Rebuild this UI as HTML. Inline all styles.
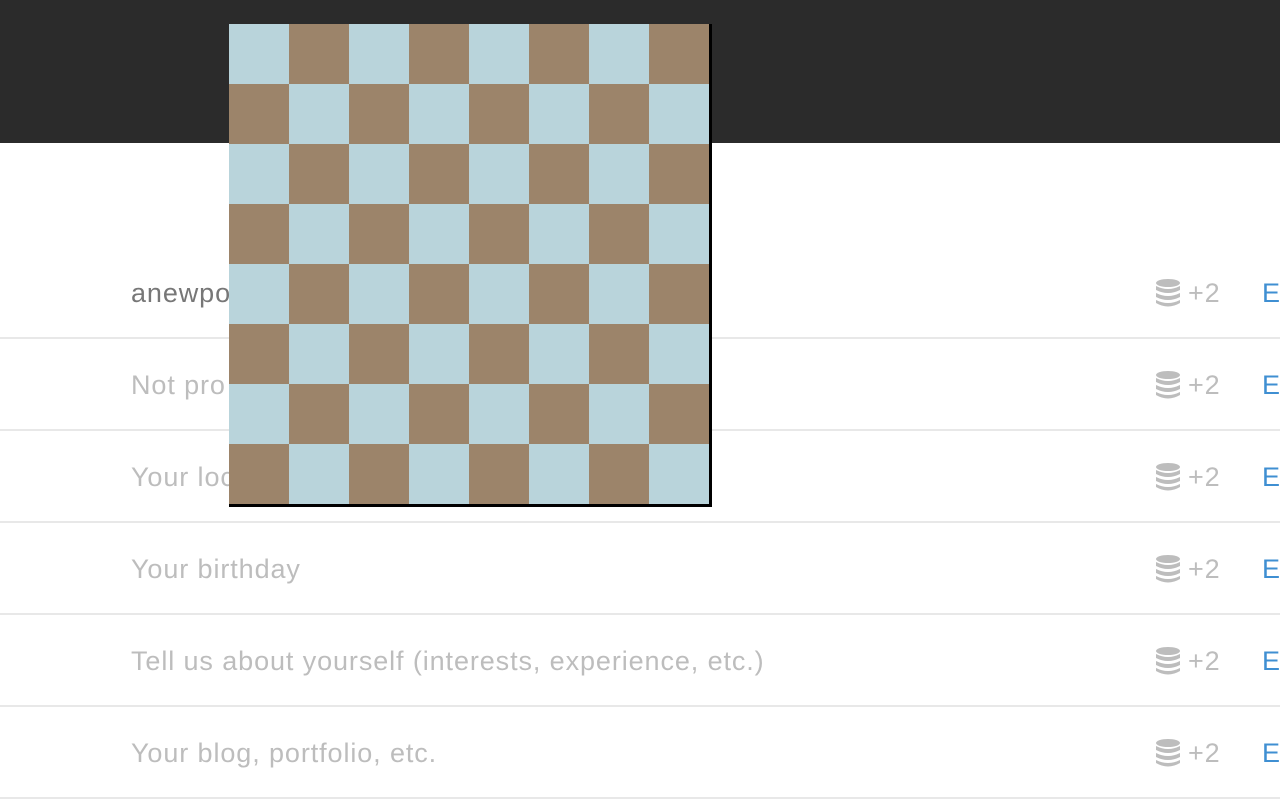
<!DOCTYPE html>
<html><head><style>
body{margin:0;width:1280px;height:800px;overflow:hidden;background:#fff;font-family:"Liberation Sans",sans-serif;position:relative}
.hdr{position:absolute;left:0;top:0;width:1280px;height:143px;background:#2b2b2b}
.row{position:absolute;left:0;width:1280px;height:92px;border-bottom:2px solid #e8e8e8;box-sizing:border-box}
.t{position:absolute;left:131px;top:31px;font-size:27px;letter-spacing:0.9px;color:#bdbdbd}
.ic{position:absolute;left:1155px;top:32px}
.p{position:absolute;left:1188px;top:31px;font-size:27px;letter-spacing:0.9px;color:#bdbdbd}
.e{position:absolute;left:1262px;top:31px;font-size:27px;color:#3f8fd2}
.board{position:absolute;left:229px;top:24px;width:480px;height:480px;border-right:3px solid #000;border-bottom:3px solid #000;display:grid;grid-template-columns:repeat(8,60px);grid-template-rows:repeat(8,60px)}
.l{background:#b9d4db}.d{background:#9c846a}
</style></head><body>
<div class="hdr"></div>
<div class="row" style="top:247px"><span class="t" style="color:#777">anewpo</span><svg class="ic" width="26" height="28" viewBox="0 0 26 28"><g fill="#bdbdbd"><ellipse cx="13" cy="4" rx="12" ry="4"/><path d="M1 7q12 6 24 0v4q-12 6-24 0z"/><path d="M1 14q12 6 24 0v4q-12 6-24 0z"/><path d="M1 21q12 6 24 0v3q-12 7-24 0z"/></g></svg><span class="p">+2</span><span class="e">E</span></div>
<div class="row" style="top:339px"><span class="t">Not pro</span><svg class="ic" width="26" height="28" viewBox="0 0 26 28"><g fill="#bdbdbd"><ellipse cx="13" cy="4" rx="12" ry="4"/><path d="M1 7q12 6 24 0v4q-12 6-24 0z"/><path d="M1 14q12 6 24 0v4q-12 6-24 0z"/><path d="M1 21q12 6 24 0v3q-12 7-24 0z"/></g></svg><span class="p">+2</span><span class="e">E</span></div>
<div class="row" style="top:431px"><span class="t">Your loc</span><svg class="ic" width="26" height="28" viewBox="0 0 26 28"><g fill="#bdbdbd"><ellipse cx="13" cy="4" rx="12" ry="4"/><path d="M1 7q12 6 24 0v4q-12 6-24 0z"/><path d="M1 14q12 6 24 0v4q-12 6-24 0z"/><path d="M1 21q12 6 24 0v3q-12 7-24 0z"/></g></svg><span class="p">+2</span><span class="e">E</span></div>
<div class="row" style="top:523px"><span class="t">Your birthday</span><svg class="ic" width="26" height="28" viewBox="0 0 26 28"><g fill="#bdbdbd"><ellipse cx="13" cy="4" rx="12" ry="4"/><path d="M1 7q12 6 24 0v4q-12 6-24 0z"/><path d="M1 14q12 6 24 0v4q-12 6-24 0z"/><path d="M1 21q12 6 24 0v3q-12 7-24 0z"/></g></svg><span class="p">+2</span><span class="e">E</span></div>
<div class="row" style="top:615px"><span class="t">Tell us about yourself (interests, experience, etc.)</span><svg class="ic" width="26" height="28" viewBox="0 0 26 28"><g fill="#bdbdbd"><ellipse cx="13" cy="4" rx="12" ry="4"/><path d="M1 7q12 6 24 0v4q-12 6-24 0z"/><path d="M1 14q12 6 24 0v4q-12 6-24 0z"/><path d="M1 21q12 6 24 0v3q-12 7-24 0z"/></g></svg><span class="p">+2</span><span class="e">E</span></div>
<div class="row" style="top:707px"><span class="t">Your blog, portfolio, etc.</span><svg class="ic" width="26" height="28" viewBox="0 0 26 28"><g fill="#bdbdbd"><ellipse cx="13" cy="4" rx="12" ry="4"/><path d="M1 7q12 6 24 0v4q-12 6-24 0z"/><path d="M1 14q12 6 24 0v4q-12 6-24 0z"/><path d="M1 21q12 6 24 0v3q-12 7-24 0z"/></g></svg><span class="p">+2</span><span class="e">E</span></div>
<div class="board">
<div class="l"></div><div class="d"></div><div class="l"></div><div class="d"></div><div class="l"></div><div class="d"></div><div class="l"></div><div class="d"></div>
<div class="d"></div><div class="l"></div><div class="d"></div><div class="l"></div><div class="d"></div><div class="l"></div><div class="d"></div><div class="l"></div>
<div class="l"></div><div class="d"></div><div class="l"></div><div class="d"></div><div class="l"></div><div class="d"></div><div class="l"></div><div class="d"></div>
<div class="d"></div><div class="l"></div><div class="d"></div><div class="l"></div><div class="d"></div><div class="l"></div><div class="d"></div><div class="l"></div>
<div class="l"></div><div class="d"></div><div class="l"></div><div class="d"></div><div class="l"></div><div class="d"></div><div class="l"></div><div class="d"></div>
<div class="d"></div><div class="l"></div><div class="d"></div><div class="l"></div><div class="d"></div><div class="l"></div><div class="d"></div><div class="l"></div>
<div class="l"></div><div class="d"></div><div class="l"></div><div class="d"></div><div class="l"></div><div class="d"></div><div class="l"></div><div class="d"></div>
<div class="d"></div><div class="l"></div><div class="d"></div><div class="l"></div><div class="d"></div><div class="l"></div><div class="d"></div><div class="l"></div>
</div>
</body></html>
